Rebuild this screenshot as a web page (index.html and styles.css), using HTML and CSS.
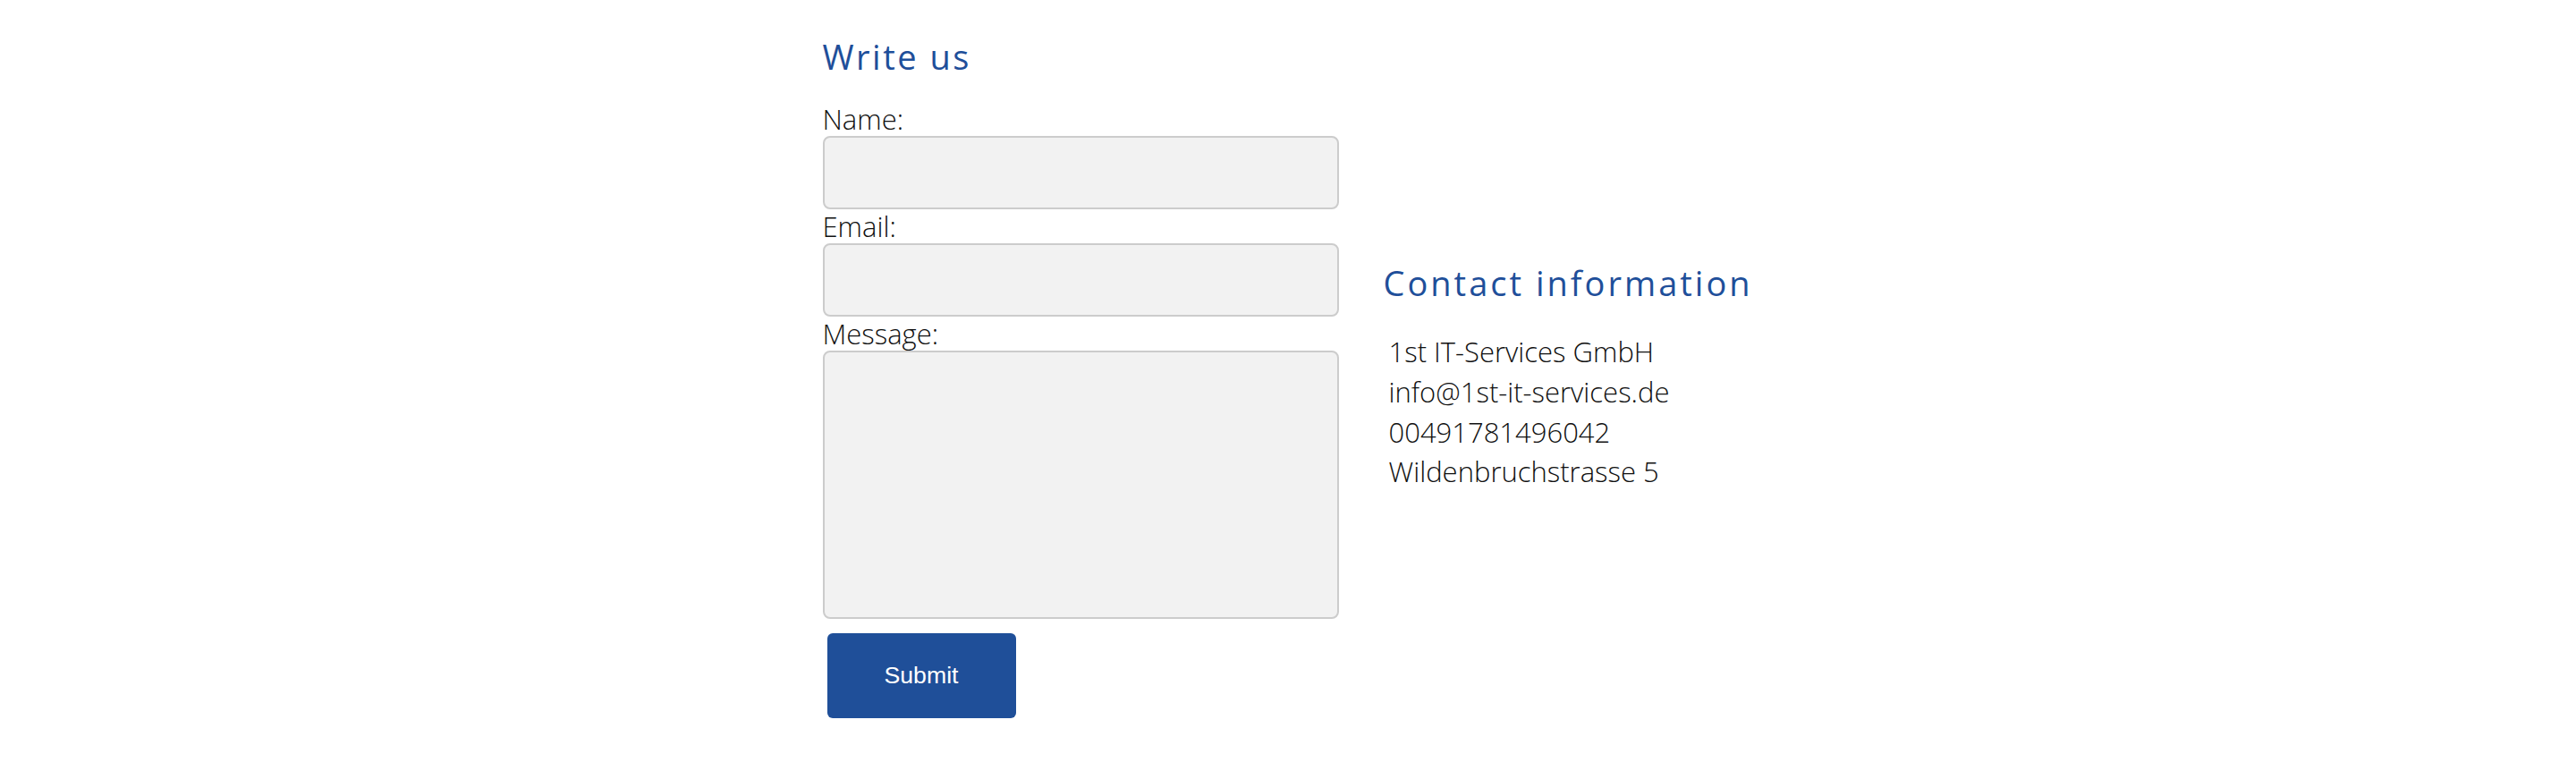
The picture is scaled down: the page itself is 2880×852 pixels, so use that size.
FILE: index.html
```html
<!DOCTYPE html>
<html lang="en">
<head>
<meta charset="utf-8">
<title>Contact</title>
<link rel="stylesheet" href="styles.css">
</head>
<body>
<main class="contact">
  <section class="write">
    <h2 class="title">Write us</h2>
    <form class="form">
      <label class="label" for="name">Name:</label>
      <input class="field" id="name" type="text">
      <label class="label" for="email">Email:</label>
      <input class="field" id="email" type="email">
      <label class="label" for="msg">Message:</label>
      <textarea class="field area" id="msg"></textarea>
      <button class="submit" type="button">Submit</button>
    </form>
  </section>
  <section class="info">
    <h2 class="title">Contact information</h2>
    <ul class="lines">
      <li>1st IT-Services GmbH</li>
      <li>info@1st-it-services.de</li>
      <li>00491781496042</li>
      <li>Wildenbruchstrasse 5</li>
    </ul>
  </section>
</main>
</body>
</html>
```
FILE: styles.css
```css
html, body {
  margin: 0;
  padding: 0;
  background: #ffffff;
}
body {
  font-family: "Open Sans", "DejaVu Sans", sans-serif;
  font-weight: 300;
  color: #111111;
}
.contact {
  display: flex;
  justify-content: center;
  align-items: center;
  gap: 50px;
  padding-top: 39px;
  padding-left: 6px;
}
.write {
  width: 577px;
}
.title {
  margin: 0;
  font-size: 38px;
  line-height: 48px;
  font-weight: 400;
  letter-spacing: 2.5px;
  color: #1f4f9a;
}
.info .title {
  letter-spacing: 3px;
  margin-bottom: 31px;
}
.write .title {
  margin-bottom: 27px;
}
.form {
  display: flex;
  flex-direction: column;
  align-items: stretch;
}
.label {
  display: block;
  font-size: 31px;
  line-height: 38px;
  height: 38px;
}
.field {
  box-sizing: border-box;
  height: 82px;
  margin: 0;
  border: 2px solid #cccccc;
  border-radius: 8px;
  background: #f2f2f2;
  font-family: inherit;
  font-size: 28px;
  outline: none;
}
.area {
  height: 300px;
  resize: none;
}
.submit {
  align-self: flex-start;
  margin: 16px 0 0 5px;
  width: 211px;
  height: 95px;
  border: 0;
  border-radius: 6px;
  background: #1f4f99;
  color: #ffffff;
  font-family: "Liberation Sans", Arial, sans-serif;
  font-size: 26.67px;
  font-weight: 400;
}
.info {
  width: 420px;
}
.lines {
  list-style: none;
  margin: 0;
  padding: 0 0 0 6px;
  font-size: 31px;
  line-height: 44.7px;
}
```
